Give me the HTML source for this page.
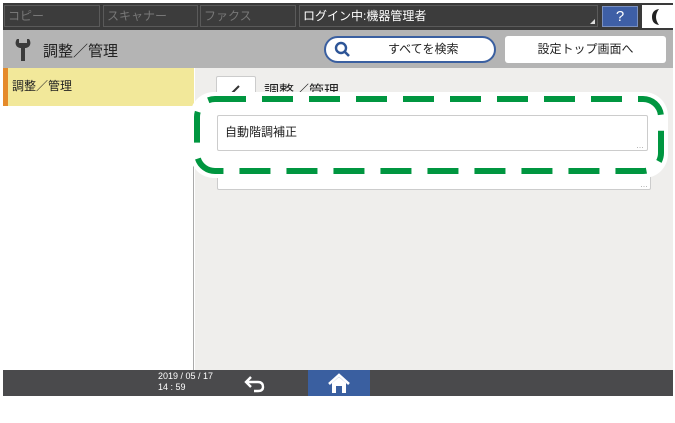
<!DOCTYPE html><html><head><meta charset="utf-8"><style>
*{margin:0;padding:0;box-sizing:border-box}
body{width:675px;height:423px;background:#fff;position:relative;overflow:hidden;font-family:"Liberation Sans","Noto Sans CJK JP",sans-serif}
.a{position:absolute}
.tab{position:absolute;top:5px;height:22px;border:1px solid #5a5a5a;color:#777;font-size:12px;line-height:20px;padding-left:3px;background:#3c3c3c}
</style></head><body>
<div class="a" style="left:3px;top:3px;width:670px;height:27px;background:#3a3a3a"></div>
<div class="tab" style="left:4px;width:96px">コピー</div>
<div class="tab" style="left:103px;width:95px">スキャナー</div>
<div class="tab" style="left:200px;width:96px">ファクス</div>
<div class="tab" style="left:299px;width:299px;color:#fff;font-size:12px">ログイン中:機器管理者<span class="a" style="right:2px;bottom:2px;width:0;height:0;border-left:5px solid transparent;border-bottom:5px solid #ddd"></span></div>
<div class="a" style="left:602px;top:6px;width:36px;height:21px;background:#3e5fa6;border:1px solid #7a90c0;color:#fff;font-size:15px;text-align:center;line-height:19px">?</div>
<div class="a" style="left:642px;top:5px;width:31px;height:23px;background:#fff"></div>
<svg class="a" style="left:650px;top:8px" width="14" height="18"><path d="M9 1 Q3 9 9 17 Q2 16 2 9 Q2 2 9 1Z" fill="#222"/></svg>
<div class="a" style="left:3px;top:30px;width:670px;height:38px;background:#b4b4b4"></div>
<svg class="a" style="left:14px;top:38px" width="18" height="24" viewBox="0 0 18 24"><path d="M3 1 C0 5 2 10 7 10 L7 23 L11 23 L11 10 C16 10 18 5 15 1 L13 1 L13 5 L5 5 L5 1Z" fill="#3b3b3b"/></svg>
<div class="a" style="left:43px;top:40px;font-size:15px;color:#222">調整／管理</div>
<div class="a" style="left:324px;top:36px;width:172px;height:27px;border:2px solid #3a5fa0;border-radius:14px;background:#fff;font-size:12px;line-height:23px;color:#222;padding-left:62px">すべてを検索</div>
<svg class="a" style="left:334px;top:41px" width="18" height="18"><circle cx="7" cy="7" r="5" fill="none" stroke="#2d5597" stroke-width="2.4"/><path d="M10.5 10.5 L15 15" stroke="#2d5597" stroke-width="2.6"/></svg>
<div class="a" style="left:505px;top:36px;width:161px;height:27px;background:#fff;border-radius:3px;font-size:12px;line-height:27px;text-align:center;color:#222">設定トップ画面へ</div>
<div class="a" style="left:3px;top:68px;width:191px;height:302px;background:#fff;border-right:1px solid #aaa"></div>
<div class="a" style="left:3px;top:68px;width:191px;height:38px;background:#f2e89a;border-left:5px solid #e58a2a;font-size:12px;line-height:36px;padding-left:4px;color:#222">調整／管理</div>
<div class="a" style="left:195px;top:68px;width:478px;height:302px;background:#efeeec"></div>
<div class="a" style="left:216px;top:76px;width:40px;height:26px;background:#fff;border:1px solid #ccc;border-radius:2px"></div>
<svg class="a" style="left:229px;top:82px" width="14" height="14"><path d="M3 11 L10 4" stroke="#333" stroke-width="2"/></svg>
<div class="a" style="left:264px;top:80px;font-size:15px;color:#222">調整／管理</div>
<div class="a" style="left:217px;top:152px;width:434px;height:38px;background:#fff;border:1px solid #ccc;border-radius:2px"></div>
<div class="a" style="left:640px;top:181px;font-size:8px;color:#999;line-height:8px">…</div>
<div class="a" style="left:190px;top:92px;width:478px;height:86px;background:#fff;border-radius:24px"></div>
<svg class="a" style="left:190px;top:92px" width="478" height="86"><rect x="7" y="7" width="464" height="72" rx="18" fill="none" stroke="#009640" stroke-width="6" stroke-dasharray="31 16"/></svg>
<div class="a" style="left:217px;top:115px;width:431px;height:36px;background:#fff;border:1px solid #ccc;border-radius:2px;font-size:12px;line-height:32px;padding-left:7px;color:#222">自動階調補正</div>
<div class="a" style="left:636px;top:142px;font-size:8px;color:#999;line-height:8px">…</div>
<div class="a" style="left:3px;top:370px;width:670px;height:26px;background:#4a4a4c"></div>
<div class="a" style="left:158px;top:371px;font-size:9px;line-height:11px;color:#fff">2019 / 05 / 17<br>14 : 59</div>
<svg class="a" style="left:243px;top:374px" width="24" height="20"><path d="M8 3 L3 8 L8 13 M3 8 L15 8 Q20 8 20 13 Q20 17 15 17 L11 17" fill="none" stroke="#fff" stroke-width="2.4"/></svg>
<div class="a" style="left:308px;top:370px;width:62px;height:26px;background:#3a5fa0"></div>
<svg class="a" style="left:327px;top:373px" width="24" height="21"><path d="M2 11 L12 2 L22 11" fill="none" stroke="#fff" stroke-width="2.6"/><path d="M5 10 L12 4 L19 10 L19 20 L15 20 L15 13 L9 13 L9 20 L5 20Z" fill="#fff"/></svg>
</body></html>
